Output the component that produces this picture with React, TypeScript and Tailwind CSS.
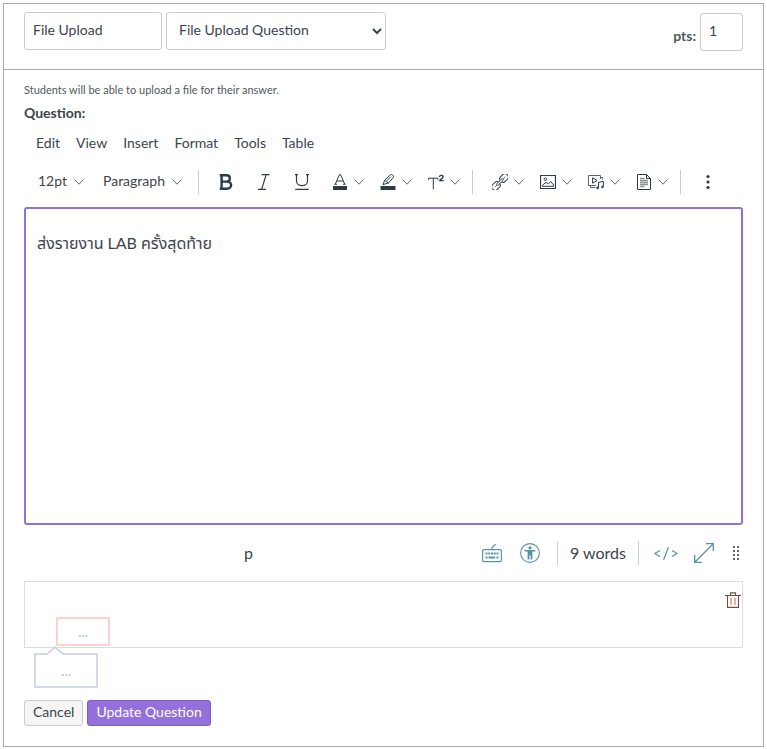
import type { ReactNode } from "react";

const menus = ["Edit", "View", "Insert", "Format", "Tools", "Table"];

function Chevron() {
  return (
    <svg className="w-[10px] h-[10px] shrink-0" viewBox="0 0 10 10" fill="none" stroke="#5b666e" strokeWidth="1">
      <path d="M0.4 2.5 L5 7.2 L9.6 2.5" />
    </svg>
  );
}

function Divider() {
  return <div className="w-px h-6 bg-[#c7cdd1]" />;
}

function Icon({ children }: { children: ReactNode }) {
  return (
    <svg className="w-4 h-4 shrink-0" viewBox="0 0 16 16" fill="none" stroke="#2d3b45" strokeWidth="1">
      {children}
    </svg>
  );
}

const formatButtons = [
  {
    label: "Bold",
    icon: <path d="M3.6 1.2 V14.8 M1.8 1.3 H8.5 C13 1.3 13 7.6 8.5 7.6 H3.2 M8.5 7.6 C14.6 7.6 14.6 14.7 8.8 14.7 H1.8" strokeWidth="2.4" />,
  },
  {
    label: "Italic",
    icon: <path d="M5.5 0.6 H13.5 M2 15.4 H10 M10.2 0.6 L5.6 15.4" strokeWidth="1.2" />,
  },
  {
    label: "Underline",
    icon: <path d="M1 0.6 H4 M12 0.6 H15 M2.5 0.6 V7 C2.5 13.2 13.5 13.2 13.5 7 V0.6 M1.2 15.4 H14.8" strokeWidth="1.2" />,
  },
];

const colorButtons = [
  {
    label: "Text color",
    icon: (
      <>
        <path d="M3.4 10 L7.4 0.6 H8.6 L12.6 10 M4.8 7 H11.2 M2.4 10.3 H5 M11 10.3 H13.6" />
        <path d="M1 12 H15 V16 H1 Z" fill="#2d3b45" stroke="none" />
      </>
    ),
  },
  {
    label: "Highlight color",
    icon: (
      <>
        <path d="M4.6 6.4 L10 0.9 C11.8 -0.4 14.6 1.8 13 3.8 L8.4 9 M4.6 6.4 L3 10.6 L8.4 9 Z M6.8 6.8 L10.8 2.6" />
        <path d="M0.5 12 H15.5 V16 H0.5 Z" fill="#2d3b45" stroke="none" />
      </>
    ),
  },
  {
    label: "Superscript",
    icon: (
      <>
        <path d="M0.6 5.8 V4.2 H10 V5.8 M5.3 4.2 V15.4" />
        <path d="M11.4 3 C11.4 0.8 15 0.8 15 2.8 C15 4.2 12.8 5 11.8 6.6 H15.6" strokeWidth="1.4" />
      </>
    ),
  },
];

const insertButtons = [
  {
    label: "Links",
    icon: (
      <g transform="rotate(-45 8 8)">
        <rect x="-2.2" y="4.7" width="9" height="6.6" rx="3" />
        <rect x="9.2" y="4.7" width="9" height="6.6" rx="3" />
        <path d="M0.6 8 H4 M12 8 H15.4" strokeWidth="0.7" />
        <path d="M4 7 H12 V9 H4 Z" fill="#fff" strokeWidth="0.9" />
      </g>
    ),
  },
  {
    label: "Images",
    icon: (
      <>
        <path d="M0.5 1.5 H15.5 V14.5 H0.5 Z" strokeWidth="1.2" />
        <circle cx="5.4" cy="5.2" r="1.3" />
        <path d="M2.4 12.3 H13.6 V11 L10.8 7.6 L8.4 9.8 L6 8.4 L2.6 11 Z" />
      </>
    ),
  },
  {
    label: "Record or upload media",
    icon: (
      <>
        <path d="M8 11.5 H0.5 V1.5 H12.5 V5 M2.5 11.5 V13.5 H7.5 M12.5 3.5 H14.5 V5.5" stroke="#5b666e" />
        <path d="M4.6 3.8 V9.2 L9 6.5 Z" />
        <path d="M10.5 13.5 V8.4 L15.4 7.4 V12.8" />
        <circle cx="9.6" cy="13.9" r="0.9" fill="#2d3b45" />
        <circle cx="14.4" cy="13" r="0.8" fill="#2d3b45" />
      </>
    ),
  },
  {
    label: "Documents",
    icon: (
      <>
        <path d="M4 4.5 H8.5 M4 6.5 H12 M4 8.5 H12 M4 10.5 H12 M4 12.5 H8.5" stroke="#8b949a" strokeWidth="1.6" />
        <path d="M1.5 0.5 H10.5 L14.5 4.5 V15.5 H1.5 Z M10.5 0.5 V4.5 H14.5" />
      </>
    ),
  },
];

type ToolItem = { label: string; icon: ReactNode };

function SplitButton({ label, icon }: ToolItem) {
  return (
    <button type="button" aria-label={label} className="flex items-center justify-center gap-[6px] w-12 h-full">
      <Icon>{icon}</Icon>
      <Chevron />
    </button>
  );
}

function Toolbar() {
  return (
    <div className="flex items-center h-[38px] mt-[10px] pl-[14px]">
      <button type="button" className="flex items-center justify-between w-[46px]">
        <span className="pb-[2px]">12pt</span>
        <Chevron />
      </button>
      <button type="button" className="flex items-center justify-between w-[79px] ml-[19px] mr-4">
        <span className="pb-[2px]">Paragraph</span>
        <Chevron />
      </button>
      <Divider />
      <div className="flex items-center h-full ml-2 mr-[3px]">
        {formatButtons.map((b) => (
          <button key={b.label} type="button" aria-label={b.label} className="flex items-center justify-center w-[38px] h-full">
            <Icon>{b.icon}</Icon>
          </button>
        ))}
      </div>
      <div className="flex h-full mr-1">
        {colorButtons.map((b) => (
          <SplitButton key={b.label} {...b} />
        ))}
      </div>
      <Divider />
      <div className="flex h-full ml-[11px] mr-1">
        {insertButtons.map((b) => (
          <SplitButton key={b.label} {...b} />
        ))}
      </div>
      <Divider />
      <button type="button" aria-label="More" className="flex items-center justify-center w-[38px] h-full ml-2">
        <svg className="w-4 h-4" viewBox="0 0 16 16" fill="#2d3b45">
          <circle cx="8" cy="2.5" r="1.6" />
          <circle cx="8" cy="8" r="1.6" />
          <circle cx="8" cy="13.5" r="1.6" />
        </svg>
      </button>
    </div>
  );
}

function StatusBar() {
  return (
    <div className="flex items-center h-14 pl-[220px] text-base">
      <span>p</span>
      <div className="flex items-center ml-auto">
        <button type="button" aria-label="Keyboard shortcuts" className="mr-[18px]">
          <svg className="w-5 h-5" viewBox="0 0 20 20" fill="none" stroke="#5795a5" strokeWidth="1.2">
            <rect x="0.6" y="6.6" width="18.8" height="12" rx="1.4" />
            <path d="M10 6.5 V4.5 L13.6 1.2" />
            <path d="M3.5 10.5 H16.5" strokeWidth="2" strokeDasharray="2 0.75" />
            <path d="M3.5 14.5 H5.5 M6.5 14.5 H13.2 M14.5 14.5 H16.5" strokeWidth="2" />
          </svg>
        </button>
        <button type="button" aria-label="Accessibility checker" className="mr-[17px]">
          <svg className="w-5 h-5" viewBox="0 0 20 20" fill="none" stroke="#5795a5">
            <circle cx="10" cy="10" r="9.4" strokeWidth="1.1" />
            <circle cx="10" cy="4.8" r="1.6" fill="#5795a5" stroke="none" />
            <path d="M4.6 7 H15.4 V8.2 L12.4 8.8 V16.4 H10.6 V12.4 H9.4 V16.4 H7.6 V8.8 L4.6 8.2 Z" fill="#5795a5" stroke="none" />
          </svg>
        </button>
        <Divider />
        <button type="button" className="px-3">9 words</button>
        <Divider />
        <button type="button" aria-label="HTML editor" className="ml-[15px] mr-4">
          <svg className="w-6 h-5" viewBox="0 0 24 20" fill="none" stroke="#5795a5" strokeWidth="1.2">
            <path d="M6 7.6 L0.8 10.5 L6 13.4 M18 7.6 L23.2 10.5 L18 13.4 M14.4 4 L9.6 17" />
          </svg>
        </button>
        <button type="button" aria-label="Fullscreen" className="mr-[18px]">
          <svg className="w-5 h-5" viewBox="0 0 20 20" fill="none" stroke="#5795a5" strokeWidth="1.3">
            <path d="M1 19 L19 1 M12 0.7 H19.3 V8 M0.7 12 V19.3 H8" />
          </svg>
        </button>
        <svg className="w-2 h-4 mr-[3px]" viewBox="0 0 8 16" fill="#5b666e">
          <path d="M1 1h2v2h-2z M5 1h2v2h-2z M1 5h2v2h-2z M5 5h2v2h-2z M1 9h2v2h-2z M5 9h2v2h-2z M1 13h2v2h-2z M5 13h2v2h-2z" />
        </svg>
      </div>
    </div>
  );
}

export default function App() {
  return (
    <form className="m-[3px] border border-[#aaa] bg-white font-['Lato','Noto_Sans_Thai','Noto_Sans',sans-serif] text-sm text-[#3b454d]">
      <div className="flex items-start gap-1 px-5 pt-2 pb-[18px] border-b border-[#aaa]">
        <input
          type="text"
          aria-label="Question name"
          defaultValue="File Upload"
          className="w-[138px] h-[38px] px-2 pb-1 border border-[#c7cdd1] rounded-[3px]"
        />
        <select aria-label="Question type" className="w-[220px] h-[38px] px-2 pb-1 border border-[#c7cdd1] rounded-[3px] bg-white">
          <option>File Upload Question</option>
        </select>
        <div className="flex items-center gap-1 ml-auto mt-px">
          <label htmlFor="points" className="pt-2 font-bold text-[#4d5961]">pts:</label>
          <input id="points" type="text" defaultValue="1" className="w-[43px] h-[38px] px-2 pb-1 border border-[#c7cdd1] rounded-[3px]" />
        </div>
      </div>

      <div className="px-5 pt-[10px] pb-5">
        <p className="text-[11px] leading-5 text-[#4d5961]">Students will be able to upload a file for their answer.</p>
        <label htmlFor="question" className="block mt-[3px] font-bold">Question:</label>

        {/* Editor */}
        <div className="flex gap-4 mt-[10px] pl-3">
          {menus.map((menu) => (
            <button key={menu} type="button">{menu}</button>
          ))}
        </div>
        <Toolbar />
        <textarea
          id="question"
          defaultValue="ส่งรายงาน LAB ครั้งสุดท้าย"
          className="block w-full h-[318px] mt-[6px] px-[11px] py-[22px] text-base border-2 border-[#9370db] rounded-[3px] resize-none outline-none"
        />
        <StatusBar />

        {/* Answer comments */}
        <div className="flex items-start justify-between h-[67px] pl-[31px] border border-[#ddd]">
          <button type="button" className="w-[54px] h-[29px] mt-[35px] border-2 border-[#ffd0d0] text-[#b5cdd6] font-bold leading-5">
            ...
          </button>
          <button type="button" aria-label="Delete" className="mt-[10px] mr-px">
            <svg className="w-4 h-4" viewBox="0 0 16 16" fill="none" stroke="#6b4f45" strokeWidth="1.1">
              <path d="M0 3.5 H16 M5.5 3.5 V0.9 H10.5 V3.5 M2.5 3.5 V15.4 H13.5 V3.5" />
              <path d="M6 6 V13 M10 6 V13" stroke="#c77b3c" />
            </svg>
          </button>
        </div>
        <div className="relative mt-[5px] ml-[10px] w-16">
          <svg className="absolute left-3 -top-[7px] w-[18px] h-[9px]" viewBox="0 0 18 9">
            <path d="M0 9 L9 1 L18 9 Z" fill="#fff" />
            <path d="M0.5 8.5 L9 1 L17.5 8.5" fill="none" stroke="#cfd8e2" strokeWidth="1.8" />
          </svg>
          <button type="button" className="block w-full h-[35px] border-2 border-[#d0daea] text-[#b5cdd6] font-bold leading-5">
            ...
          </button>
        </div>

        <div className="flex gap-1 mt-3">
          <button type="button" className="h-[26px] px-2 pb-[2px] border border-[#c7cdd1] rounded-[3px] bg-[#f5f5f5]">Cancel</button>
          <button type="submit" className="h-[26px] px-2 pb-[2px] border border-[#7e5bc0] rounded-[3px] bg-[#9370db] text-white">Update Question</button>
        </div>
      </div>
    </form>
  );
}
